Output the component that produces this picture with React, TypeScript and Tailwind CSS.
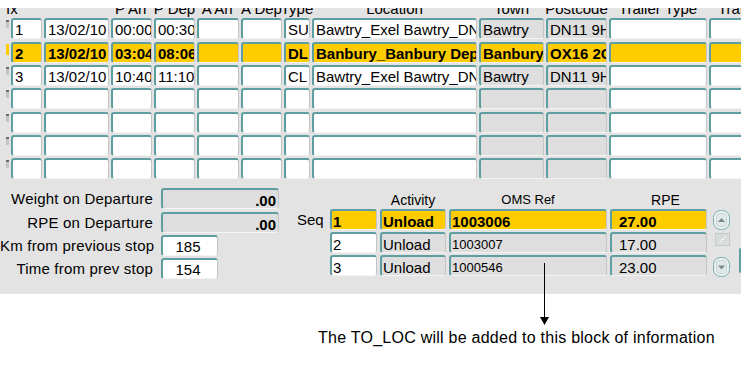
import React from 'react';

// Oracle Forms style stop list, recreated as a plain static screen

type Tone = 'white' | 'grey' | 'yellow';

const fills: Record<Tone, string> = {
  white: 'bg-white',
  grey: 'bg-[#dedede]',
  yellow: 'bg-[#ffcc00]',
};

const cellBase =
  'h-[21px] overflow-hidden whitespace-nowrap rounded-[3px] border-t-2 border-l-2 border-r border-b border-t-[#5f9ea0] border-l-[#5f9ea0] border-r-[#c4c4c4] border-b-[#f4f4f4] text-black';

function Cell({
  tone = 'white',
  bold = false,
  className = '',
  children,
}: {
  tone?: Tone;
  bold?: boolean;
  className?: string;
  children?: React.ReactNode;
}) {
  return (
    <div className={`${cellBase} ${fills[tone]} ${bold ? 'font-bold' : ''} ${className}`}>
      {children}
    </div>
  );
}

const gridCols =
  'grid grid-cols-[3px_31px_65px_41px_41px_42px_41px_26px_165px_65px_61px_98px_60px] gap-x-[2px] pl-[6px]';

// headings over columns 3..12 (date column has none)
const headers = ['P Arr', 'P Dep', 'A Arr', 'A Dep', 'Type', 'Location', 'Town', 'Postcode', 'Trailer Type', 'Trailer'];

const rows = [
  { cells: ['1', '13/02/10', '00:00', '00:30', '', '', 'SU', 'Bawtry_Exel Bawtry_DN11 9HQ', 'Bawtry', 'DN11 9HQ', '', ''], sel: false, mt: '' },
  { cells: ['2', '13/02/10', '03:04', '08:06', '', '', 'DL', 'Banbury_Banbury Depot', 'Banbury', 'OX16 2GZ', '', ''], sel: true, mt: 'mt-[3px]' },
  { cells: ['3', '13/02/10', '10:40', '11:10', '', '', 'CL', 'Bawtry_Exel Bawtry_DN11 9HQ', 'Bawtry', 'DN11 9HQ', '', ''], sel: false, mt: 'mt-[2px]' },
  { cells: ['', '', '', '', '', '', '', '', '', '', '', ''], sel: false, mt: 'mt-[2px]' },
  { cells: ['', '', '', '', '', '', '', '', '', '', '', ''], sel: false, mt: 'mt-[3px]' },
  { cells: ['', '', '', '', '', '', '', '', '', '', '', ''], sel: false, mt: 'mt-[2px]' },
  { cells: ['', '', '', '', '', '', '', '', '', '', '', ''], sel: false, mt: 'mt-[2px]' },
];

const fields = [
  { label: 'Weight on Departure', value: '.00', kind: 'grey', mt: '' },
  { label: 'RPE on Departure', value: '.00', kind: 'grey', mt: 'mt-[3px]' },
  { label: 'Km from previous stop', value: '185', kind: 'white', mt: 'mt-[2px]' },
  { label: 'Time from prev stop', value: '154', kind: 'white', mt: 'mt-[2px]' },
];

const activities = [
  { seq: '1', act: 'Unload', oms: '1003006', rpe: '27.00', sel: true },
  { seq: '2', act: 'Unload', oms: '1003007', rpe: '17.00', sel: false },
  { seq: '3', act: 'Unload', oms: '1000546', rpe: '23.00', sel: false },
];

const rowGaps = ['mt-0', 'mt-[2px]', 'mt-[2px]'];

function ScrollButton({ down = false }: { down?: boolean }) {
  return (
    <svg width="17" height="20" viewBox="0 0 17 20">
      <rect x="0.5" y="0.5" width="16" height="19" rx="7" fill="#eaf1f1" stroke="#79acac" />
      <rect x="3.5" y="3.5" width="10" height="13" rx="3" fill="#e0e7e7" stroke="#c6d4d4" />
      {down ? (
        <path d="M5 8.5 L12 8.5 L8.5 12.5 Z" fill="#7a8888" />
      ) : (
        <path d="M5 12 L12 12 L8.5 8 Z" fill="#7a8888" />
      )}
    </svg>
  );
}

export default function App() {
  return (
    <div className="relative w-[752px] h-[366px] overflow-hidden bg-white font-['Liberation_Sans',Arial,sans-serif] text-black">
      <div className="h-[8px]" />

      <div className="w-[741px] h-[286px] overflow-hidden bg-[#e3e3e3]">
        {/* column headings, cut at the top like the original capture */}
        <div className="h-[10px] overflow-hidden">
          <div className={`${gridCols} -mt-[7px] h-[17px]`}>
            <div className="text-[15px] leading-[15px] whitespace-nowrap">Ix</div>
            <div />
            <div />
            {headers.map((h) => (
              <div key={h} className="flex justify-center text-[15px] leading-[15px] whitespace-nowrap">
                {h}
              </div>
            ))}
          </div>
        </div>

        {/* record rows */}
        {rows.map((row, r) => (
          <div key={r} className={`${gridCols} ${row.mt}`}>
            <div className="pt-[2px]">
              {row.sel ? (
                <div className="h-[11px] w-[3px] bg-[#ffcc00]" />
              ) : (
                <div className="h-[8px] w-[3px] border-t-2 border-t-[#6a6a6a] bg-[#c4c4c4]" />
              )}
            </div>
            {row.cells.map((c, i) => (
              <Cell
                key={i}
                tone={row.sel ? 'yellow' : i === 8 || i === 9 ? 'grey' : 'white'}
                bold={row.sel}
                className="pl-[2px] pt-[1px] text-[15px] leading-[18px]"
              >
                {c}
              </Cell>
            ))}
          </div>
        ))}

        {/* lower block */}
        <div className="mt-[9px] flex">
          <div className="flex flex-col">
            {fields.map((f) => (
              <div key={f.label} className={`flex ${f.mt}`}>
                <div className="w-[153px] overflow-visible whitespace-nowrap text-right text-[15px] leading-[21px] tracking-[0.2px]">
                  {f.label}
                </div>
                {f.kind === 'grey' ? (
                  <Cell tone="grey" bold className="ml-[8px] w-[118px] pr-[2px] pt-[2px] text-right text-[15px] leading-[18px]">
                    {f.value}
                  </Cell>
                ) : (
                  <Cell className="ml-[8px] w-[57px] pr-[4px] pt-[1px] text-center text-[15px] leading-[18px]">
                    {f.value}
                  </Cell>
                )}
              </div>
            ))}
          </div>

          <div className="ml-[18px] flex">
            {/* Seq label */}
            <div className="w-[33px] flex flex-col">
              <div className="h-[20px]" />
              <div className="mt-[1px] h-[21px] pt-[2px] text-[15px] leading-[18px]">Seq</div>
            </div>

            <div className="w-[47px] flex flex-col">
              <div className="h-[20px]" />
              {activities.map((a, i) => (
                <Cell
                  key={i}
                  tone={a.sel ? 'yellow' : 'white'}
                  bold={a.sel}
                  className={`${i === 0 ? 'mt-[1px]' : rowGaps[i]} pl-[1px] pt-[2px] text-[15px] leading-[18px]`}
                >
                  {a.seq}
                </Cell>
              ))}
            </div>

            <div className="ml-[3px] w-[66px] flex flex-col">
              <div className="h-[20px] pt-[2px] text-center text-[14px] leading-[20px]">Activity</div>
              {activities.map((a, i) => (
                <Cell
                  key={i}
                  tone={a.sel ? 'yellow' : 'grey'}
                  bold={a.sel}
                  className={`${i === 0 ? 'mt-[1px]' : rowGaps[i]} pl-[1px] pt-[2px] text-[15px] leading-[18px]`}
                >
                  {a.act}
                </Cell>
              ))}
            </div>

            <div className="ml-[3px] w-[158px] flex flex-col">
              <div className="h-[20px] pt-[2px] text-center text-[13px] leading-[20px]">OMS Ref</div>
              {activities.map((a, i) => (
                <Cell
                  key={i}
                  tone={a.sel ? 'yellow' : 'grey'}
                  bold={a.sel}
                  className={`${i === 0 ? 'mt-[1px] text-[15px]' : `${rowGaps[i]} text-[13px]`} pl-[1px] pt-[2px] leading-[18px]`}
                >
                  {a.oms}
                </Cell>
              ))}
            </div>

            <div className="ml-[3px] w-[97px] flex flex-col">
              <div className="h-[20px] pl-[14px] pt-[2px] text-center text-[14px] leading-[20px]">RPE</div>
              {activities.map((a, i) => (
                <Cell
                  key={i}
                  tone={a.sel ? 'yellow' : 'grey'}
                  bold={a.sel}
                  className={`${i === 0 ? 'mt-[1px]' : rowGaps[i]} pl-[7px] pt-[2px] text-[15px] leading-[18px]`}
                >
                  {a.rpe}
                </Cell>
              ))}
            </div>

            {/* record scroller */}
            <div className="ml-[6px] w-[17px] flex flex-col">
              <div className="h-[22px]" />
              <ScrollButton />
              <div className="mt-[3px] ml-[2px]">
                <svg width="15" height="13" viewBox="0 0 15 13">
                  <rect x="0.5" y="0.5" width="14" height="12" fill="#d7dcdc" stroke="#c2caca" />
                  <path d="M5 9 L10 4" stroke="#ffffff" strokeWidth="1.5" strokeDasharray="1.5 1.5" />
                </svg>
              </div>
              <div className="mt-[11px]">
                <ScrollButton down />
              </div>
            </div>

            <div className="ml-[9px] mt-[60px] h-[25px] w-[3px] rounded-l-[2px] bg-[#5f9ea0]" />
          </div>
        </div>
      </div>

      {/* annotation arrow over the OMS Ref block */}
      <svg className="absolute left-[539px] top-[263px]" width="11" height="63" viewBox="0 0 11 63">
        <line x1="5.5" y1="0" x2="5.5" y2="55" stroke="#000" strokeWidth="1" />
        <path d="M1 54 L10 54 L5.5 62 Z" fill="#000" />
      </svg>

      <div className="ml-[318px] mt-[35px] whitespace-nowrap text-[16px] leading-[17px] tracking-[0.25px] text-[#000]">
        The TO_LOC will be added to this block of information
      </div>
    </div>
  );
}
